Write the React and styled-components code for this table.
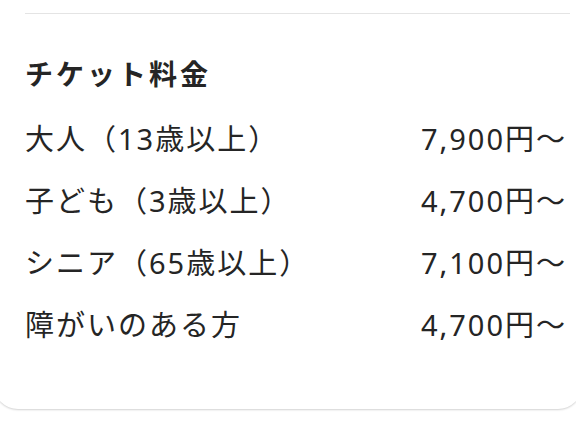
import React from 'react';
import styled, { createGlobalStyle } from 'styled-components';

const prices = [
    { label: '大人（13歳以上）', price: '7,900円〜' },
    { label: '子ども（3歳以上）', price: '4,700円〜' },
    { label: 'シニア（65歳以上）', price: '7,100円〜' },
    { label: '障がいのある方', price: '4,700円〜' }
];

const App = () => (
    <>
        <GlobalStyle />
        <Page>
            <Card>
                <Divider />
                <Title>チケット料金</Title>
                <PriceList>
                    {prices.map(item => (
                        <PriceRow key={item.label}>
                            <span>{item.label}</span>
                            <span>{item.price}</span>
                        </PriceRow>
                    ))}
                </PriceList>
            </Card>
        </Page>
    </>
);

const GlobalStyle = createGlobalStyle`
    body {
        margin: 0;
        background: #ffffff;
        font-family: "Noto Sans", "Noto Sans CJK JP", sans-serif;
        color: #252525;
    }
`;

const Page = styled.div`
    width: 576px;
    height: 430px;
    overflow: hidden;
`;

const Card = styled.div`
    margin: 0 -6px;
    padding: 13px 15px 55px 31px;
    background: #ffffff;
    border-radius: 0 0 24px 24px;
    box-shadow: 0 1px 2px rgba(0, 0, 0, 0.18);
`;

const Divider = styled.div`
    height: 1px;
    background: #e4e4e4;
    margin-right: -3px;
`;

const Title = styled.h2`
    margin: 40px 0 0;
    height: 40px;
    line-height: 40px;
    font-size: 28px;
    font-weight: 700;
    letter-spacing: 3px;
`;

const PriceList = styled.div`
    margin-top: 12px;
    display: flex;
    flex-direction: column;
`;

const PriceRow = styled.div`
    height: 62px;
    display: flex;
    align-items: center;
    justify-content: space-between;
    font-size: 29px;
    letter-spacing: 2px;
`;

export default App;
